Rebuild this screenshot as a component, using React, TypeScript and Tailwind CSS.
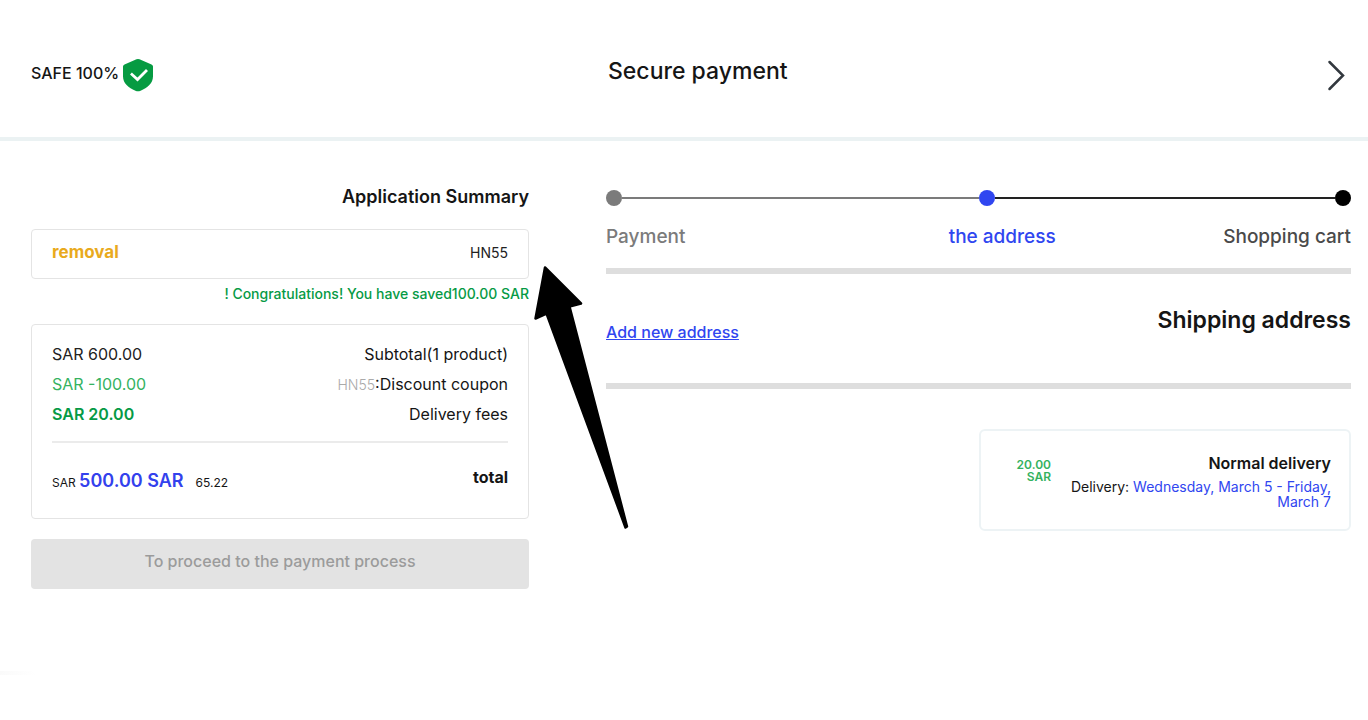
import { useState } from "react";
import clsx from "clsx";

interface SummaryRow {
  label: string;
  coupon?: string;
  amount: string;
  amountClass: string;
}

const rows: SummaryRow[] = [
  { label: "Subtotal(1 product)", amount: "SAR 600.00", amountClass: "text-[#222222]" },
  { label: ":Discount coupon", coupon: "HN55", amount: "SAR -100.00", amountClass: "text-[#35b25f]" },
  { label: "Delivery fees", amount: "SAR 20.00", amountClass: "font-semibold text-[#069a45]" },
];

function ShieldIcon() {
  return (
    <svg width="32" height="34" viewBox="0 0 32 34" aria-hidden="true">
      <path
        d="M14.5 1.300a3.500 3.500 0 0 1 3 0l12 5.200c1 .5 1.500 1.200 1.500 2.300v9.500c0 7.200-5.600 11.600-12.400 14.500-1.800.7-3.400.7-5.200 0C6.600 29.900 1 25.500 1 18.300V8.800c0-1.100.5-1.800 1.500-2.300z"
        fill="#069b42"
      />
      <path d="m10 16.500 5.500 5 8.500-8.500" fill="none" stroke="#fff" strokeWidth="2.800" strokeLinecap="square" />
    </svg>
  );
}

function Header() {
  return (
    <header className="grid h-[141px] grid-cols-[498fr_745fr] gap-x-[77px] border-b-4 border-[#ebf2f3] pr-[17px] pl-[31px]">
      <div className="flex items-center gap-[3px] pt-3">
        <span className="pb-1 text-base font-medium">SAFE 100%</span>
        <ShieldIcon />
      </div>
      <div className="flex items-center justify-between">
        <h1 className="pt-1.5 pl-0.5 text-[23px] font-medium">Secure payment</h1>
        <button type="button" aria-label="Back" className="cursor-pointer pt-3 pr-1.5">
          <svg width="18" height="32" viewBox="0 0 18 32" fill="none" stroke="#32383e" strokeWidth="2.500" strokeLinecap="round">
            <path d="m2.500 3 13.500 13.500L2.500 30" />
          </svg>
        </button>
      </div>
    </header>
  );
}

function Summary() {
  const [coupon] = useState("HN55");

  return (
    <section className="min-w-0">
      <h2 className="text-right text-lg leading-7 font-semibold">Application Summary</h2>

      <div className="mt-[18px] flex h-[50px] items-center justify-between rounded border border-[#e4e4e4] px-5 pb-0.5">
        <button type="button" className="cursor-pointer text-[17px] font-bold text-[#e9aa1d]">removal</button>
        <span className="text-sm text-[#222222]">{coupon}</span>
      </div>
      <p className="mt-[3px] text-right text-sm leading-6 font-medium text-[#069a45]">
        ! Congratulations! You have saved100.00 SAR
      </p>

      <div className="mt-[18px] h-[195px] rounded border border-[#e4e4e4] px-5 pt-3.5">
        <dl className="border-b-2 border-[#ebebeb] pb-3">
          {rows.map((row) => (
            <div key={row.label} className="flex h-[30px] flex-row-reverse items-center justify-between text-base">
              <dt>
                {row.coupon && <span className="text-sm font-light text-[#aaaaaa]">{row.coupon}</span>}
                {row.label}
              </dt>
              <dd className={row.amountClass}>{row.amount}</dd>
            </div>
          ))}
        </dl>
        <div className="flex justify-between pt-6">
          <p className="text-xs leading-8">
            SAR <span className="text-lg font-semibold text-[#3341ed]">500.00 SAR</span>
            <span className="ml-3">65.22</span>
          </p>
          <p className="text-base leading-5 font-bold">total</p>
        </div>
      </div>

      <button
        type="button"
        disabled
        className="mt-5 h-[50px] w-full rounded bg-[#e3e3e3] pb-1.5 text-base font-medium text-[#9b9b9b]"
      >
        To proceed to the payment process
      </button>
    </section>
  );
}

function Dot({ className }: { className: string }) {
  return <span className={clsx("size-4 shrink-0 rounded-full", className)} />;
}

function Steps() {
  return (
    <nav aria-label="Checkout steps">
      <div className="grid grid-cols-2">
        <div className="flex items-center">
          <Dot className="bg-[#7b7b7b]" />
          <span className="h-0.5 flex-1 bg-[#7b7b7b]" />
        </div>
        <div className="flex items-center">
          <Dot className="bg-[#3046f0]" />
          <span className="h-0.5 flex-1 bg-[#222222]" />
          <Dot className="bg-black" />
        </div>
      </div>
      <ol className="mt-[17px] flex text-[19px] leading-7 font-medium">
        <li className="w-[46%] text-[#7b7b7b]">Payment</li>
        <li className="text-[#3046f0]">the address</li>
        <li className="ml-auto text-[#4a4a4a]">Shopping cart</li>
      </ol>
    </nav>
  );
}

function Shipping() {
  return (
    <section className="min-w-0 pt-[7px]">
      <Steps />
      <hr className="mt-[17px] border-t-[6px] border-[#dedede]" />
      <div className="flex h-[109px] items-start justify-between pt-7">
        <a href="#new-address" className="mt-[18px] text-base font-medium text-[#3046f0] underline">
          Add new address
        </a>
        <h2 className="text-[23px] leading-9 font-semibold">Shipping address</h2>
      </div>
      <hr className="border-t-[6px] border-[#dedede]" />

      <div className="mt-10 ml-auto flex min-h-[102px] w-1/2 justify-end gap-4 rounded-md border-2 border-[#edf3f5] px-[18px] pt-5">
        <p className="w-10 pt-2 text-right text-xs leading-3 font-semibold text-[#35b25f]">20.00 SAR</p>
        <div className="w-[264px] text-right">
          <h3 className="text-base leading-6 font-semibold">Normal delivery</h3>
          <p className="pt-1 text-sm leading-[15px]">
            Delivery: <span className="text-[#3046f0]">Wednesday, March 5 - Friday, March 7</span>
          </p>
        </div>
      </div>
    </section>
  );
}

export default function App() {
  return (
    <div className="relative min-h-screen bg-white font-['Inter',sans-serif] text-[#151515]">
      <Header />
      <main className="grid grid-cols-[498fr_745fr] gap-x-[77px] pt-[42px] pr-[17px] pl-[31px]">
        <Summary />
        <Shipping />
      </main>
      <div className="mt-[82px] h-1 w-9 bg-linear-to-r from-[#fafafa] to-white" />

      {/* pointer to the coupon box */}
      <svg
        className="pointer-events-none absolute top-[264px] left-[532px]"
        width="98"
        height="268"
        viewBox="532 264 98 268"
        aria-hidden="true"
      >
        <path
          d="M545 267.500 581 303.500 569.500 306.500 627 526.500 625.500 527.500 546.500 313.500 535.500 318.500Z"
          fill="#000"
          stroke="#000"
          strokeWidth="2.500"
          strokeLinejoin="round"
        />
      </svg>
    </div>
  );
}
